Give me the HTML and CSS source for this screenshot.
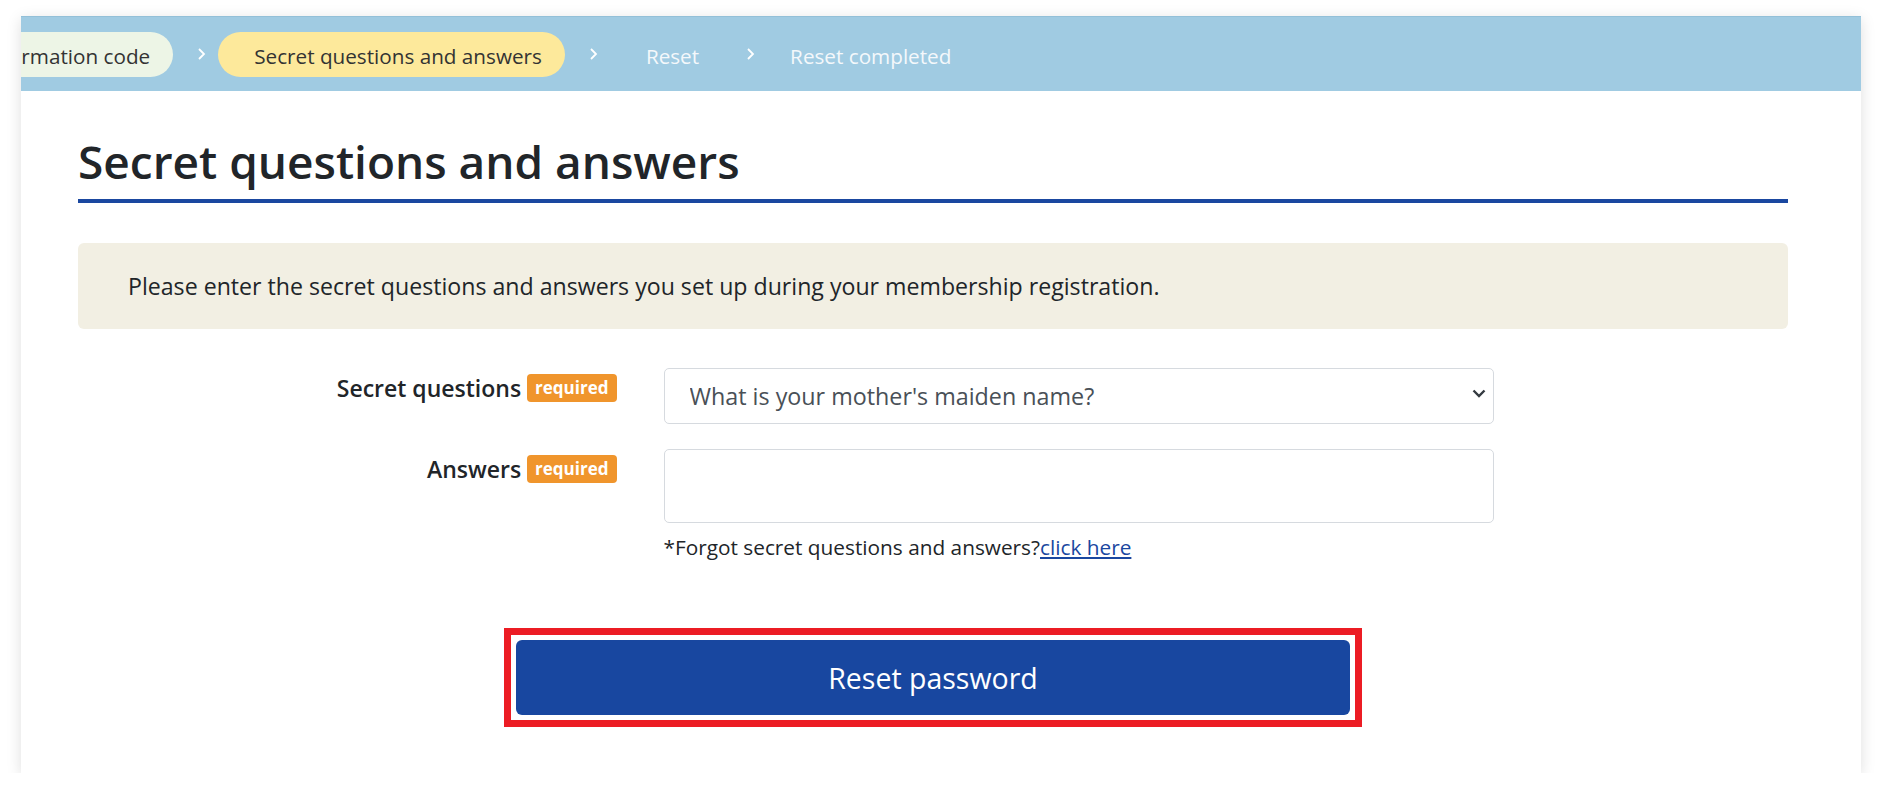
FILE: index.html
```html
<!DOCTYPE html>
<html lang="en">
<head>
    <meta charset="UTF-8">
    <meta name="viewport" content="width=device-width, initial-scale=1.0">
    <title>Secret questions and answers</title>
    <link rel="stylesheet" href="styles.css">
</head>
<body>
    <div class="panel">
        <nav class="steps">
            <ol class="step-list">
                <li class="step step-done">Confirmation code</li>
                <li class="step-sep"><svg width="9" height="14" viewBox="0 0 9 14"><path d="M2 2l5 5-5 5" fill="none" stroke="#ffffff" stroke-width="1.8"/></svg></li>
                <li class="step step-current">Secret questions and answers</li>
                <li class="step-sep"><svg width="9" height="14" viewBox="0 0 9 14"><path d="M2 2l5 5-5 5" fill="none" stroke="#ffffff" stroke-width="1.8"/></svg></li>
                <li class="step">Reset</li>
                <li class="step-sep"><svg width="9" height="14" viewBox="0 0 9 14"><path d="M2 2l5 5-5 5" fill="none" stroke="#ffffff" stroke-width="1.8"/></svg></li>
                <li class="step step-last">Reset completed</li>
            </ol>
        </nav>

        <div class="content">
            <h1 class="page-title">Secret questions and answers</h1>

            <div class="notice">
                Please enter the secret questions and answers you set up during your membership registration.
            </div>

            <form class="qa-form">
                <div class="form-row">
                    <label class="form-label" for="question">Secret questions <span class="badge">required</span></label>
                    <div class="form-field">
                        <div class="select-wrap">
                            <select id="question" class="form-select">
                                <option>What is your mother's maiden name?</option>
                            </select>
                            <svg class="select-arrow" width="14" height="9" viewBox="0 0 14 9"><path d="M1.5 1.5l5.5 5.5 5.5-5.5" fill="none" stroke="#343a40" stroke-width="2.4"/></svg>
                        </div>
                    </div>
                </div>
                <div class="form-row">
                    <label class="form-label" for="answer">Answers <span class="badge">required</span></label>
                    <div class="form-field">
                        <input type="text" id="answer" class="form-input">
                        <p class="form-help">*Forgot secret questions and answers?<a href="#">click here</a></p>
                    </div>
                </div>
                <div class="form-actions">
                    <div class="highlight">
                        <button type="submit" class="btn-submit">Reset password</button>
                    </div>
                </div>
            </form>
        </div>
    </div>
</body>
</html>
```
FILE: styles.css
```css
body {
    font-family: "Open Sans", "Noto Sans", Arial, sans-serif;
    margin: 0;
    padding: 16px 0 0;
    background-color: #fff;
    color: #212529;
}

.panel {
    margin: 0 21px;
    background-color: #fff;
    box-shadow: 0 3px 14px rgba(0, 0, 0, 0.13);
    padding-bottom: 46px;
}

/* steps bar */
.steps {
    height: 75px;
    background-color: #a0cbe2;
    border-top: 1px solid #93c0d8;
    box-sizing: border-box;
    overflow: hidden;
    display: flex;
    align-items: center;
}

.step-list {
    list-style: none;
    margin: 0 0 0 -86px;
    padding: 0;
    display: flex;
    align-items: center;
    white-space: nowrap;
}

.step {
    height: 45px;
    box-sizing: border-box;
    padding: 3px 23px 0 36px;
    line-height: 42px;
    border-radius: 23px;
    font-size: 20.7px;
    color: #f4f8fb;
}

.step-done {
    background-color: #edf5e6;
    color: #333;
}

.step-current {
    background-color: #fde99b;
    color: #333;
}

.step-last {
    padding-left: 23px;
}

.step-sep {
    display: flex;
    margin: 0 12px 0 24px;
}

/* content */
.content {
    padding: 43px 73px 0 57px;
}

.page-title {
    margin: 0;
    font-size: 46px;
    font-weight: 600;
    line-height: 55px;
    padding-bottom: 10px;
    border-bottom: 4px solid #1a47a0;
    color: #212529;
}

.notice {
    margin-top: 40px;
    padding: 28px 50px;
    line-height: 30px;
    font-size: 23.15px;
    background-color: #f2efe3;
    border-radius: 6px;
    color: #212529;
}

.qa-form {
    width: 1121px;
    margin: 39px auto 0;
}

.form-row {
    display: grid;
    grid-template-columns: 244px 830px;
    column-gap: 47px;
    margin-bottom: 25px;
}

.form-label {
    display: flex;
    justify-content: flex-end;
    align-items: center;
    gap: 6px;
    height: 28px;
    margin-top: 6px;
    font-size: 23px;
    font-weight: 600;
    white-space: nowrap;
    color: #212529;
}

.badge {
    display: inline-block;
    height: 28px;
    line-height: 28px;
    padding: 0 8px;
    border-radius: 4px;
    background-color: #f0952c;
    color: #fff;
    font-size: 17px;
    font-weight: 700;
}

.select-wrap {
    position: relative;
}

.form-select,
.form-input {
    display: block;
    width: 100%;
    box-sizing: border-box;
    border: 1px solid #d6dadf;
    border-radius: 5px;
    background-color: #fff;
    font-family: inherit;
}

.form-select {
    height: 56px;
    padding: 0 50px 0 25px;
    font-size: 23.3px;
    color: #495057;
    appearance: none;
    -webkit-appearance: none;
}

.select-arrow {
    position: absolute;
    right: 8px;
    top: 21px;
}

.form-input {
    height: 74px;
    padding: 0 20px;
    font-size: 23px;
}

.form-help {
    margin: 10px 0 0;
    font-size: 20.8px;
    line-height: 28px;
    color: #212529;
}

.form-help a {
    color: #1a47a0;
}

.form-actions {
    display: flex;
    justify-content: center;
    margin-top: 67px;
}

.highlight {
    border: 7px solid #ec1c24;
    padding: 5px;
}

.btn-submit {
    display: block;
    width: 834px;
    height: 75px;
    background-color: #1847a0;
    color: #fff;
    border: none;
    border-radius: 6px;
    font-family: inherit;
    font-size: 28.5px;
    cursor: pointer;
}
```
